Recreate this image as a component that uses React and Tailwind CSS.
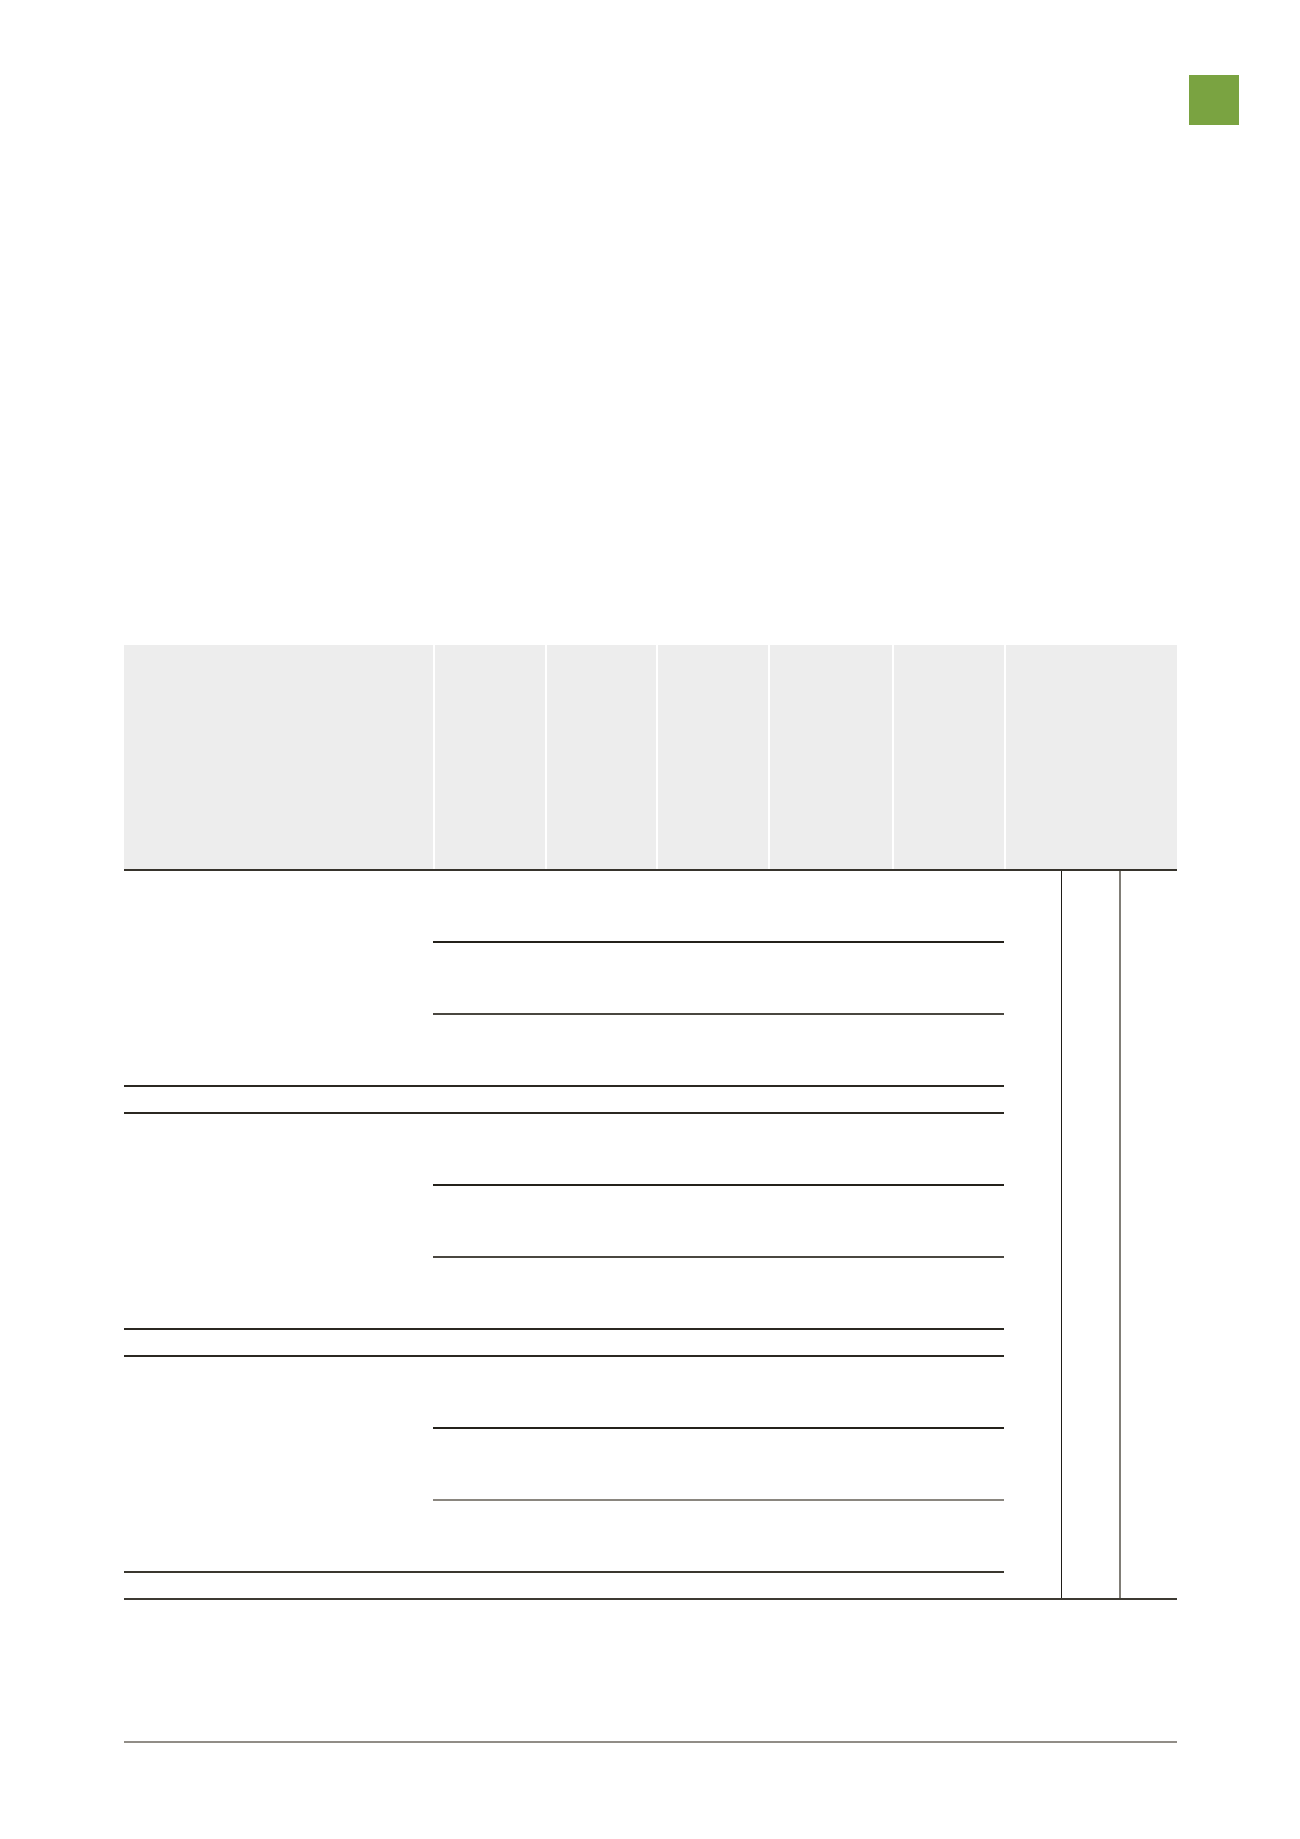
import React from "react";

const headerCols = ["w-[309px]", "w-[110px]", "w-[109px]", "w-[110px]", "w-[122px]", "w-[110px]", "flex-1"];

const groups = [
  { lines: ["bg-[#24211b]", "bg-[#4a4740]"], total: "bg-[#2b2821]", close: true },
  { lines: ["bg-[#24211b]", "bg-[#4a4740]"], total: "bg-[#2b2821]", close: true },
  { lines: ["bg-[#24211b]", "bg-[#8a867f]"], total: "bg-[#3a372f]", close: false },
];

const Group = ({ lines, total, close }) => (
  <div className="flex flex-col">
    <div className="h-[70px]" />
    <div className={`ml-[309px] h-[2px] ${lines[0]}`} />
    <div className="h-[70px]" />
    <div className={`ml-[309px] h-[2px] ${lines[1]}`} />
    <div className="h-[70px]" />
    <div className={`h-[2px] ${total}`} />
    <div className="h-[25px]" />
    {close && <div className="h-[2px] bg-[#2b2821]" />}
  </div>
);

export default function App() {
  return (
    <div className="min-h-[1839px] bg-white font-['Liberation_Sans',sans-serif]">
      {/* page tab */}
      <div className="flex justify-end pt-[75px] pr-[61px]">
        <div className="w-[50px] h-[50px] bg-[#7aa341]" />
      </div>

      <div className="ml-[124px] mt-[520px] w-[1053px]">
        {/* table head */}
        <div className="flex h-[224px] gap-[2px]">
          {headerCols.map((w, i) => (
            <div key={i} className={`${w} bg-[#ededed]`} />
          ))}
        </div>
        <div className="h-[2px] bg-[#36332c]" />

        {/* table body */}
        <div className="flex">
          <div className="w-[880px] flex flex-col">
            {groups.map((g, i) => (
              <Group key={i} {...g} />
            ))}
          </div>
          <div className="flex-1 flex">
            <div className="w-[57px]" />
            <div className="w-px bg-[#1f1d18]" />
            <div className="w-[57px]" />
            <div className="w-[2px] bg-[#807d76]" />
            <div className="flex-1" />
          </div>
        </div>
        <div className="h-[2px] bg-[#3d3a33]" />

        {/* footer rule */}
        <div className="mt-[141px] h-[2px] bg-[#918d87]" />
      </div>
    </div>
  );
}
